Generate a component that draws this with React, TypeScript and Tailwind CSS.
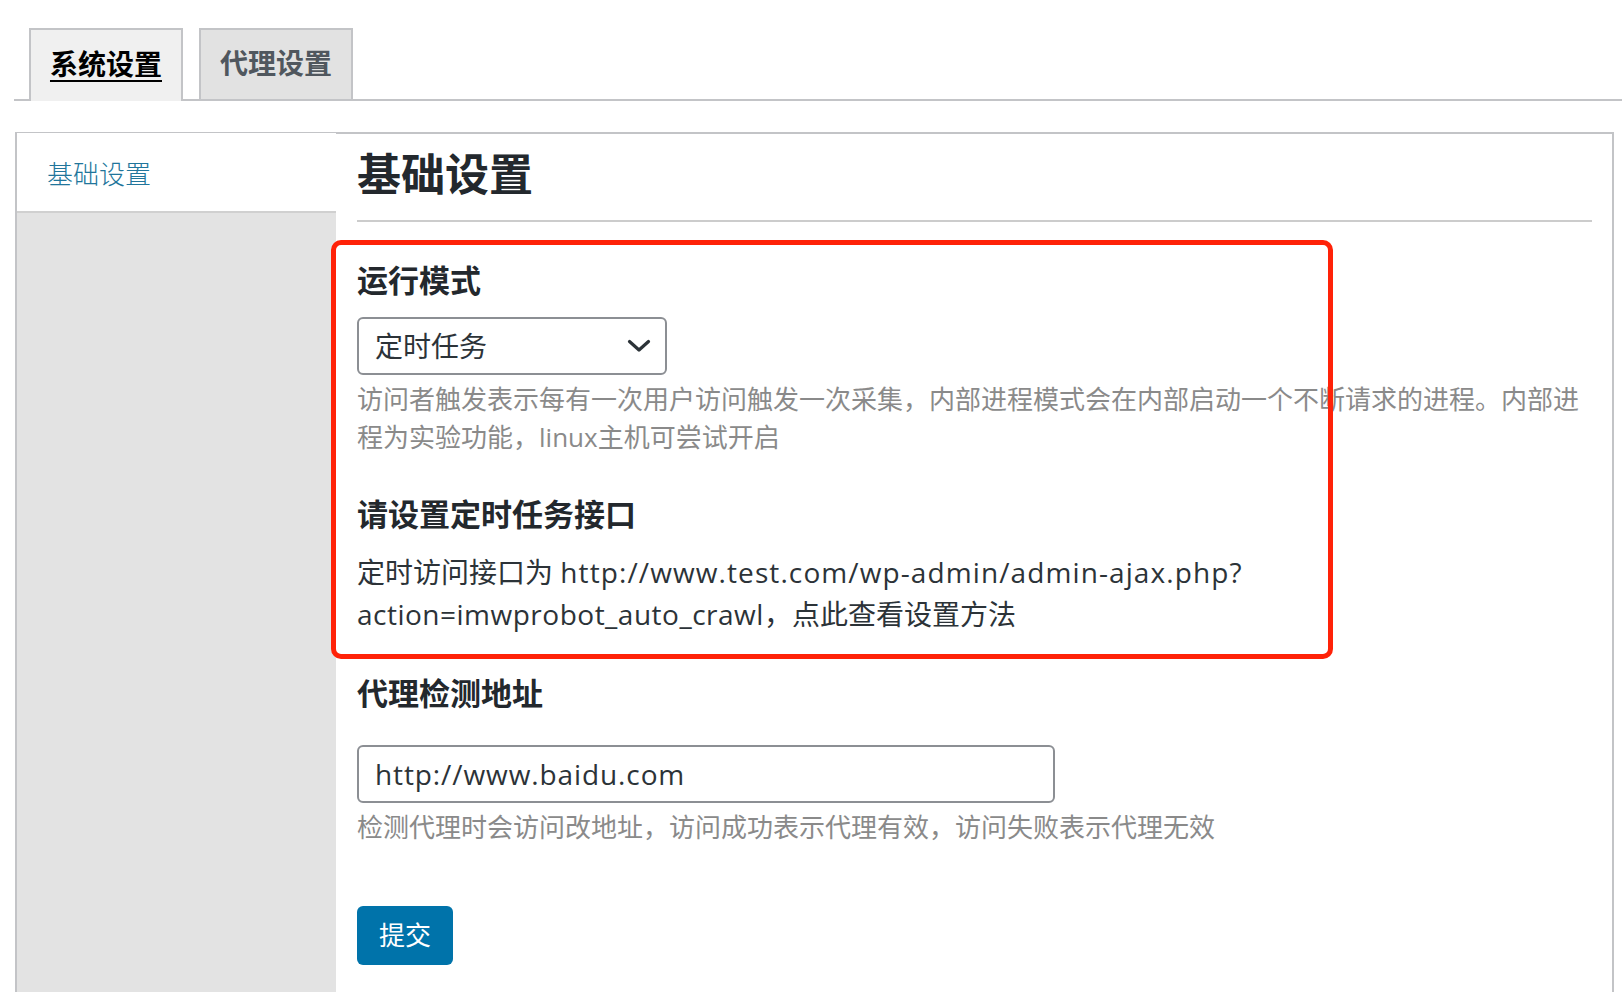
import React from "react";

export default function App() {
  return (
    <div
      className="relative w-[1622px] h-[992px] overflow-hidden bg-white text-[#23282d]"
      style={{ fontFamily: '"Open Sans", "Noto Sans CJK SC", sans-serif' }}
    >
      {/* Tabs */}
      <div className="pt-[28px] ml-[14px] border-b-2 border-[#c3c4c7] flex gap-[16px] pl-[15px] h-[101px]">
        <div className="w-[154px] h-[73px] border-2 border-b-0 border-[#c3c4c7] bg-[#f0f0f0] flex items-center justify-center relative z-10 -mb-[2px] pb-[4px]">
          <span className="text-[28px] font-bold text-black underline decoration-2 underline-offset-[5px]">系统设置</span>
        </div>
        <div className="w-[154px] h-[71px] border-2 border-b-0 border-[#c3c4c7] bg-[#e2e2e2] flex items-center justify-center pb-[4px]">
          <span className="text-[28px] font-bold text-[#50575e]">代理设置</span>
        </div>
      </div>

      {/* Panel */}
      <div className="mt-[31px] ml-[15px] mr-[8px] border-2 border-[#c3c4c7] flex h-[900px]">
        <div className="w-[319px] shrink-0 bg-[#e3e3e3]">
          <div className="h-[80px] bg-white border-b-2 border-[#d0d0d0] flex items-center pl-[30px] -mt-[1px]">
            <span className="text-[26px] text-[#21759b]" style={{ fontFamily: '"Noto Sans CJK SC", serif', fontWeight: 300 }}>基础设置</span>
          </div>
        </div>
        <div className="flex-1 pl-[21px] pr-[20px] pt-[10px]">
          <h1 className="text-[44px] leading-[60px] font-bold pb-[16px] border-b-2 border-[#cccccc]">基础设置</h1>

          <h3 className="mt-[38px] text-[31px] leading-[40px] font-bold">运行模式</h3>
          <div className="mt-[17px] w-[310px] h-[58px] border-2 border-[#8c8f94] rounded-[6px] flex items-center justify-between pl-[16px] pr-[14px]">
            <span className="text-[28px] text-[#2c3338]">定时任务</span>
            <svg width="24" height="14" viewBox="0 0 24 14" fill="none">
              <path d="M2.5 2.5 L12 11 L21.5 2.5" stroke="#2c3338" strokeWidth="3.2" strokeLinecap="round" strokeLinejoin="round" />
            </svg>
          </div>
          <p className="mt-[5px] text-[26px] leading-[38px] text-[#8a8a8a]">
            访问者触发表示每有一次用户访问触发一次采集，内部进程模式会在内部启动一个不断请求的进程。内部进程为实验功能，linux主机可尝试开启
          </p>

          <h3 className="mt-[38px] text-[31px] leading-[40px] font-bold">请设置定时任务接口</h3>
          <p className="mt-[17px] text-[28px] leading-[42px] text-[#2c3338]">
            定时访问接口为 <span className="tracking-[1.1px]">http://www.test.com/wp-admin/admin-ajax.php?</span>
            <br />
            <span className="tracking-[0.5px]">action=imwprobot_auto_crawl</span>，点此查看设置方法
          </p>

          <h3 className="mt-[38px] text-[31px] leading-[40px] font-bold">代理检测地址</h3>
          <div className="mt-[32px] w-[698px] h-[58px] border-2 border-[#8c8f94] rounded-[6px] flex items-center pl-[16px]">
            <span className="text-[28px] text-[#2c3338] tracking-[0.9px]">http://www.baidu.com</span>
          </div>
          <p className="mt-[5px] text-[26px] leading-[38px] text-[#8a8a8a]">
            检测代理时会访问改地址，访问成功表示代理有效，访问失败表示代理无效
          </p>

          <button className="mt-[60px] w-[96px] h-[59px] bg-[#0073aa] rounded-[6px] text-white text-[26px] flex items-center justify-center">
            提交
          </button>
        </div>
      </div>

      {/* Red annotation box */}
      <div className="absolute left-[331px] top-[240px] w-[1002px] h-[419px] border-[5px] border-[#ff2208] rounded-[10px] pointer-events-none" />
    </div>
  );
}
